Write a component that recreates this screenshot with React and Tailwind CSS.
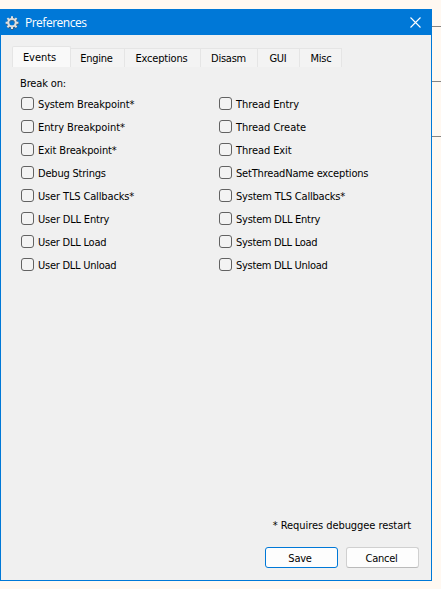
const tabs = [
  { label: 'Engine', width: 'w-[54px] pr-[2px]' },
  { label: 'Exceptions', width: 'w-[76px] pr-[2px] tracking-[-0.18px]' },
  { label: 'Disasm', width: 'w-[57px] pr-px' },
  { label: 'GUI', width: 'w-[42px] pr-px' },
  { label: 'Misc', width: 'w-[42px] pl-px' },
];

const leftEvents = [
  { label: 'System Breakpoint*', tracking: 'tracking-[-0.14px]' },
  { label: 'Entry Breakpoint*', tracking: 'tracking-[-0.08px]' },
  { label: 'Exit Breakpoint*', tracking: 'tracking-[-0.12px]' },
  { label: 'Debug Strings', tracking: 'tracking-[-0.2px]' },
  { label: 'User TLS Callbacks*', tracking: 'tracking-[-0.14px]' },
  { label: 'User DLL Entry', tracking: 'tracking-[-0.18px]' },
  { label: 'User DLL Load', tracking: 'tracking-[-0.22px]' },
  { label: 'User DLL Unload', tracking: 'tracking-[-0.25px]' },
];

const rightEvents = [
  { label: 'Thread Entry', tracking: 'tracking-[-0.08px]' },
  { label: 'Thread Create', tracking: 'tracking-[-0.04px]' },
  { label: 'Thread Exit', tracking: 'tracking-[-0.08px]' },
  { label: 'SetThreadName exceptions', tracking: 'tracking-[-0.18px]' },
  { label: 'System TLS Callbacks*', tracking: 'tracking-[-0.2px]' },
  { label: 'System DLL Entry', tracking: 'tracking-[-0.25px]' },
  { label: 'System DLL Load', tracking: 'tracking-[-0.29px]' },
  { label: 'System DLL Unload', tracking: 'tracking-[-0.3px]' },
];

function GearIcon() {
  return (
    <svg width="14" height="14" viewBox="0 0 14 14" fill="none">
      <path d="M7.3 1v12.8M1 7.3h12.8M2.9 2.9l8.8 8.8M11.7 2.9l-8.8 8.8" stroke="#45586b" strokeWidth="2.8" />
      <path d="M7 .3v12.8M.6 6.7h12.8M2.4 2.1l9.2 9.2M11.6 2.1l-9.2 9.2" stroke="#e3e3e3" strokeWidth="2" />
      <circle cx="7" cy="6.7" r="3.7" fill="#0078d7" stroke="#dddddd" strokeWidth="2.2" />
      <path d="M4.6 6.7a2.4 2.4 0 0 1 4.8 0" stroke="#526b84" strokeWidth=".8" />
    </svg>
  );
}

function Option({ label, tracking }) {
  return (
    <label className="flex h-[23px] items-center gap-1 whitespace-nowrap">
      <span className="h-[13px] w-[13px] shrink-0 rounded-[3px] border border-[#626262] bg-[#f3f3f3]" />
      <span className={`pt-[2px] ${tracking}`}>{label}</span>
    </label>
  );
}

export default function App() {
  return (
    <div className="relative h-[589px] w-[441px] overflow-hidden bg-[#fff8f1] pt-[9px] font-['DejaVu_Sans_Condensed','DejaVu_Sans',sans-serif] text-[11px] leading-[14px] tracking-[-0.25px] text-black">
      <div className="absolute left-[432px] top-[26px] h-px w-[9px] bg-[#848484]" />
      <div className="absolute left-[432px] top-[81px] h-px w-[9px] bg-[#848484]" />
      <div className="absolute left-[432px] top-[136px] h-px w-[9px] bg-[#848484]" />
      <div className="flex h-[572px] w-[432px] flex-col border border-[#0078d7] bg-[#f0f0f0]">
        <header className="flex h-[25px] shrink-0 items-center bg-[#0078d7] pl-1 pr-[10px] text-white">
          <GearIcon />
          <h1 className="ml-[6px] flex-1 pt-px font-['Open_Sans','Noto_Sans',sans-serif] text-[12px] leading-4 tracking-[-0.5px]">Preferences</h1>
          <svg width="11" height="11" viewBox="0 0 11 11" stroke="white" strokeWidth="1.1">
            <path d="M.5.5l10 10M10.5.5l-10 10" />
          </svg>
        </header>
        <nav className="mt-[11px] flex h-[21px] shrink-0 items-end pl-[11px]">
          <button className="h-[21px] w-[59px] rounded-t-[2px] border border-b-0 border-[#e5e5e5] bg-[#f9f9f9] pr-[4px] pt-[2px] tracking-[-0.05px]">Events</button>
          {tabs.map((tab) => (
            <button key={tab.label} className={`h-[19px] border-r border-t border-[#e5e5e5] bg-[#f3f3f3] pt-px ${tab.width}`}>
              {tab.label}
            </button>
          ))}
        </nav>
        <main className="flex flex-1 flex-col pl-5">
          <p className="mt-[10px] -ml-px tracking-[-0.15px]">Break on:</p>
          <div className="mt-px flex">
            <div className="w-[198px]">
              {leftEvents.map((event) => <Option key={event.label} {...event} />)}
            </div>
            <div>
              {rightEvents.map((event) => <Option key={event.label} {...event} />)}
            </div>
          </div>
        </main>
        <footer className="flex shrink-0 flex-col items-end pb-3 pr-3">
          <p className="mr-2 tracking-[-0.06px]">* Requires debuggee restart</p>
          <div className="mt-[14px] flex gap-2">
            <button className="h-[21px] w-[73px] rounded-[3px] border border-[#0078d7] bg-[#fdfdfd] pr-[3px] pt-[2px]">Save</button>
            <button className="h-[21px] w-[73px] rounded-[3px] border border-[#d0d0d0] border-b-[#bababa] bg-[#fdfdfd] pr-[2px] pt-[2px]">Cancel</button>
          </div>
        </footer>
      </div>
    </div>
  );
}
